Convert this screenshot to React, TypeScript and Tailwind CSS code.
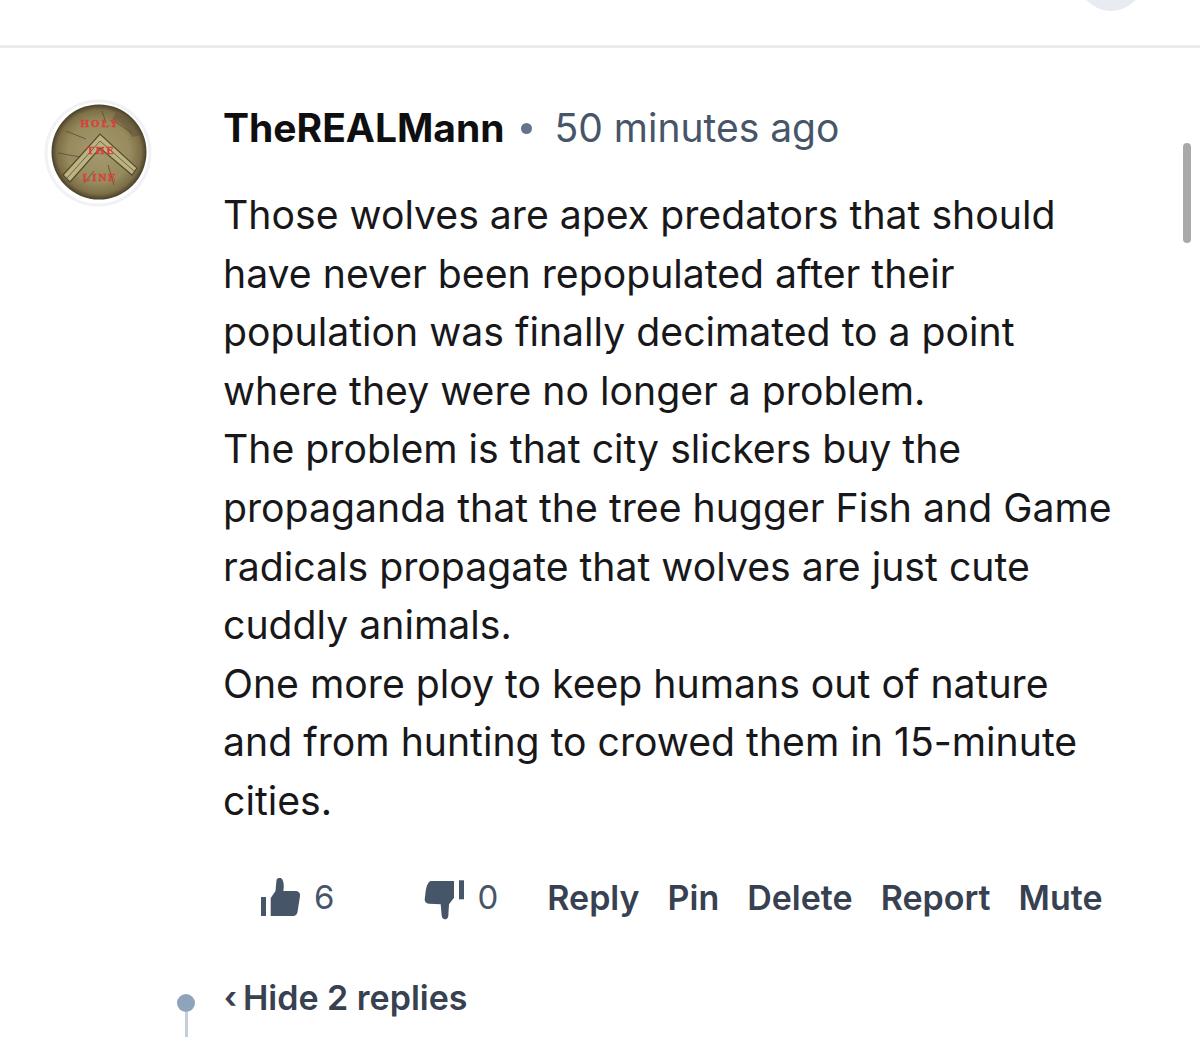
const lines = [
  "Those wolves are apex predators that should",
  "have never been repopulated after their",
  "population was finally decimated to a point",
  "where they were no longer a problem.",
  "The problem is that city slickers buy the",
  "propaganda that the tree hugger Fish and Game",
  "radicals propagate that wolves are just cute",
  "cuddly animals.",
  "One more ploy to keep humans out of nature",
  "and from hunting to crowed them in 15-minute",
  "cities.",
];

const actions = ["Reply", "Pin", "Delete", "Report", "Mute"];

const Avatar = () => (
  <svg viewBox="0 0 108 108" className="h-[108px] w-[108px] shrink-0">
    <defs>
      <radialGradient id="shield" cx="50%" cy="50%" r="50%">
        <stop offset="0%" stopColor="#a59a6e" />
        <stop offset="65%" stopColor="#978b5e" />
        <stop offset="88%" stopColor="#7d7048" />
        <stop offset="100%" stopColor="#4a3f2a" />
      </radialGradient>
      <filter id="soft">
        <feGaussianBlur stdDeviation="0.5" />
      </filter>
    </defs>
    <circle cx="54" cy="54" r="53.5" fill="#f1f2f4" />
    <circle cx="54" cy="54" r="50.5" fill="#fff" />
    <g filter="url(#soft)">
      <circle cx="55" cy="53" r="47.5" fill="url(#shield)" />
      <path d="M72 14 A47 47 0 0 1 98 36 L88 38 A38 38 0 0 0 68 20 Z" fill="#5a4e34" opacity="0.45" />
      <path d="M19 76 L56 35 L93 69 L88 76 L56 49 L26 83 Z" fill="#bdb284" stroke="#544a2e" strokeWidth="1.2" />
      <path d="M23 79 L56 42 L90 72" fill="none" stroke="#6f6440" strokeWidth="1" />
      <path d="M22 32 L42 40 M70 22 L88 34 M14 54 L36 58 M64 66 L70 86 M40 84 L50 72 M58 12 L62 24" stroke="#4f4529" strokeWidth="0.9" opacity="0.75" />
      <g fill="#d8413c" stroke="#d8413c" strokeWidth="0.4" fontFamily="'Liberation Serif', serif" fontWeight="700" textAnchor="middle" fontSize="11" letterSpacing="2">
        <text x="56" y="27.5">HOLY</text>
        <text x="57" y="54.5">THE</text>
        <text x="56" y="81.5">LINE</text>
      </g>
    </g>
  </svg>
);

const ThumbUp = () => (
  <svg viewBox="0 0 42 42" className="mt-[2px] h-[42px] w-[42px] overflow-visible" fill="#475569">
    <rect x="1" y="19" width="5" height="19" />
    <path d="M10.7 38 V20 L15.5 13 L16.5 2 C17 0 20 -0.3 21.5 0.5 C23.5 2 24.5 8 23.3 13 H35 C38.5 13 40.5 15 40 18 L37.5 34 C37 36.5 35.5 38 33 38 Z" />
  </svg>
);

const ThumbDown = () => (
  <svg viewBox="0 0 42 42" className="mt-[2px] h-[42px] w-[42px] overflow-visible" fill="#475569">
    <rect x="35" y="2.3" width="5" height="19" />
    <path d="M6.7 3 H30 V19.7 L25 26.3 L24.3 38 C24 40.5 22.5 41.3 21 41.3 C19.5 41.3 18 40 17.7 38 L16.7 26.3 L5 25.7 C2 25.5 0.5 23.5 0.7 21.3 L1.7 13 C2.5 8 4 4 6.7 3 Z" />
  </svg>
);

export default function App() {
  return (
    <div className="relative h-[1037px] w-[1200px] overflow-hidden bg-white font-['Inter',sans-serif]">
      {/* top of the previous comment */}
      <div className="flex h-[48px] justify-end border-b-[3px] border-[#ececee] pr-[56px]">
        <div className="-mt-[55px] h-[66px] w-[66px] rounded-full bg-[#e8ecf2]" />
      </div>

      <div className="flex pl-[44px] pt-[51px]">
        <Avatar />
        <div className="ml-[71px] mt-[1px] flex flex-col">
          <div className="flex h-[56px] items-center text-[39px]">
            <span className="font-bold text-[#0f0f12]">TheREALMann</span>
            <span className="ml-[16px] h-[11px] w-[11px] rounded-full bg-[#64748b]" />
            <span className="ml-[23px] text-[#475569]">50 minutes ago</span>
          </div>
          <div className="mt-[30px] flex flex-col text-[39.2px] leading-[58.6px] text-[#18181b]">
            {lines.map((line) => (
              <div key={line} className="whitespace-nowrap">
                {line}
              </div>
            ))}
          </div>
          <div className="mt-[37px] flex h-[60px] items-center text-[33px] text-[#475569]">
            <div className="ml-[37px] flex items-center">
              <ThumbUp />
              <span className="ml-[12px]">6</span>
            </div>
            <div className="ml-[90px] flex items-center">
              <ThumbDown />
              <span className="ml-[11px]">0</span>
            </div>
            <div className="ml-[49px] flex gap-[28px] text-[34px] font-semibold text-[#374151]">
              {actions.map((a) => (
                <span key={a}>{a}</span>
              ))}
            </div>
          </div>
        </div>
      </div>

      {/* hide replies row with thread marker */}
      <div className="mt-[40px] flex items-start pl-[177px]">
        <div className="flex w-[18px] flex-col items-center pt-[26px]">
          <div className="h-[18px] w-[18px] rounded-full bg-[#8fa3bd]" />
          <div className="h-[30px] w-[3px] bg-[#c5cedb]" />
        </div>
        <div className="ml-[29px] flex h-[60px] items-center text-[34px] font-semibold text-[#374151]">
          <span className="text-[30px] font-bold">‹</span>
          <span className="ml-[6px]">Hide 2 replies</span>
        </div>
      </div>

      {/* scrollbar */}
      <div className="absolute left-[1183px] top-[143px] h-[100px] w-[8px] rounded-full bg-[#a9a9a9]" />
    </div>
  );
}
